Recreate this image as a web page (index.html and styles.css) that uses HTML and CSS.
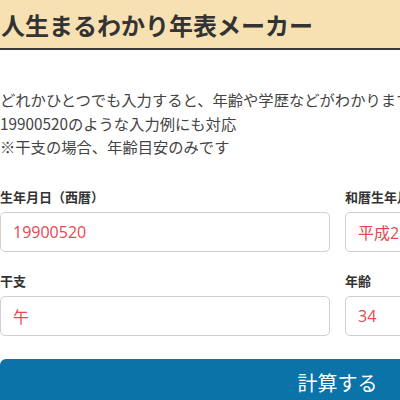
FILE: index.html
```html
<!DOCTYPE html>
<html lang="ja">
<head>
    <meta charset="UTF-8">
    <meta name="viewport" content="width=device-width, initial-scale=1.0">
    <title>人生まるわかり年表メーカー</title>
    <link rel="stylesheet" href="styles.css">
</head>
<body>
    <div class="header">
        <h1>人生まるわかり年表メーカー</h1>
    </div>

    <div class="container">
        <p class="lead">
            どれかひとつでも入力すると、年齢や学歴などがわかります<br>
            19900520のような入力例にも対応<br>
            ※干支の場合、年齢目安のみです
        </p>

        <div class="form-grid">
            <div class="field">
                <label for="seireki">生年月日（西暦）</label>
                <input id="seireki" type="text" value="19900520">
            </div>
            <div class="field">
                <label for="wareki">和暦生年月日</label>
                <input id="wareki" type="text" value="平成2年5月20日">
            </div>
            <div class="field">
                <label for="eto">干支</label>
                <input id="eto" type="text" value="午">
            </div>
            <div class="field">
                <label for="age">年齢</label>
                <input id="age" type="text" value="34">
            </div>
        </div>

        <button class="calc-btn">計算する</button>
    </div>
</body>
</html>
```

FILE: styles.css
```css
body {
    font-family: "Noto Sans CJK JP", sans-serif;
    margin: 0;
    padding: 0;
    background-color: white;
    color: #333;
    overflow: hidden;
}
.header {
    background-color: #f7e1b3;
    border-bottom: 2px solid #3a3a3a;
    height: 48px;
    display: flex;
    align-items: center;
}
.header h1 {
    margin: 0 0 0 1px;
    font-size: 24px;
    font-weight: bold;
    color: #333;
    white-space: nowrap;
}
.container {
    width: 675px;
}
.lead {
    margin: 38px 0 0;
    font-size: 15.3px;
    line-height: 23.5px;
    color: #444;
    white-space: nowrap;
}
.form-grid {
    display: grid;
    grid-template-columns: 330px 330px;
    column-gap: 15px;
    row-gap: 19px;
    margin-top: 28px;
}
.field label {
    display: block;
    font-size: 13px;
    font-weight: bold;
    line-height: 20px;
    margin-bottom: 5px;
    color: #333;
}
.field input {
    box-sizing: border-box;
    width: 100%;
    height: 40px;
    border: 1px solid #cfcfcf;
    border-radius: 5px;
    padding: 0 12px;
    font-family: "Open Sans", "Noto Sans CJK JP", sans-serif;
    font-size: 16px;
    color: #e8474f;
    background-color: white;
}
.calc-btn {
    display: block;
    width: 100%;
    height: 48px;
    margin-top: 23px;
    border: none;
    border-radius: 6px;
    background-color: #0b73a8;
    color: white;
    font-family: "Noto Sans CJK JP", sans-serif;
    font-size: 20px;
}
```
